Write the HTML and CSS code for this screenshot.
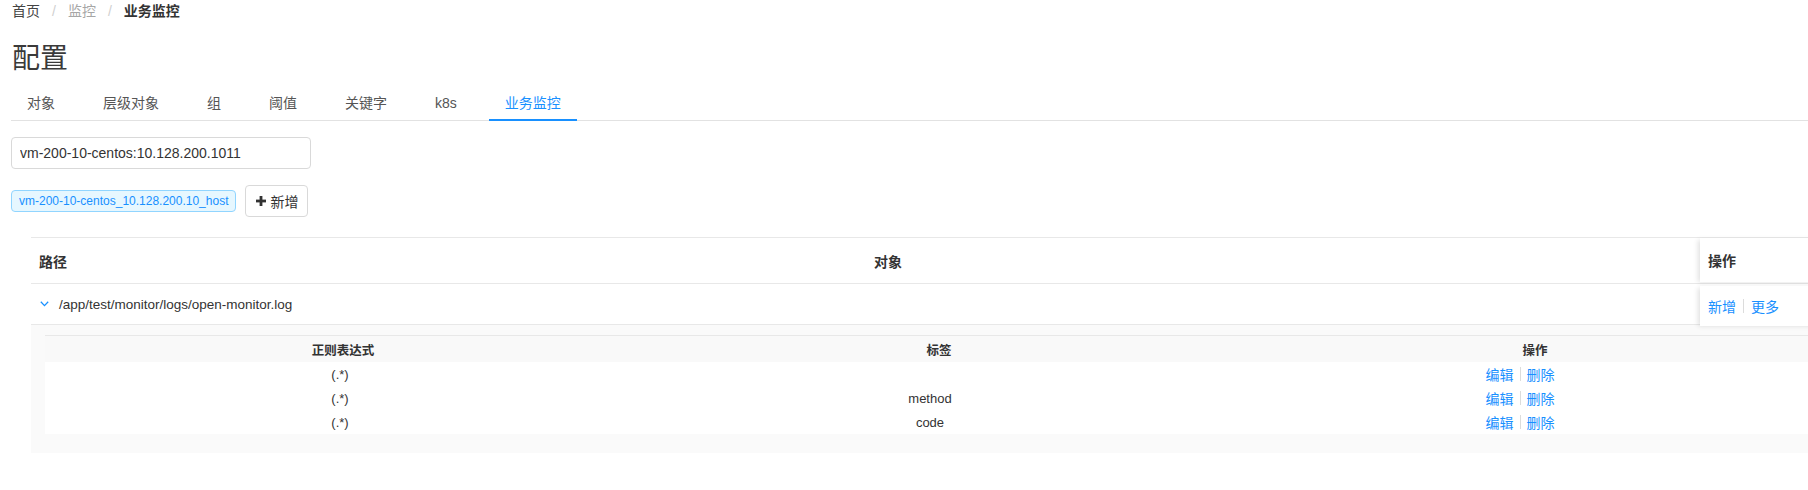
FILE: index.html
```html
<!DOCTYPE html>
<html lang="zh">
<head>
<meta charset="utf-8">
<title>配置</title>
<link rel="stylesheet" href="styles.css">
</head>
<body>
<div class="page">
  <nav class="crumbs">
    <span class="crumb">首页</span><span class="sep">/</span><span class="crumb muted">监控</span><span class="sep">/</span><span class="crumb current">业务监控</span>
  </nav>
  <h1 class="title">配置</h1>
  <div class="tabs">
    <div class="tab">对象</div>
    <div class="tab">层级对象</div>
    <div class="tab">组</div>
    <div class="tab">阈值</div>
    <div class="tab">关键字</div>
    <div class="tab">k8s</div>
    <div class="tab active">业务监控</div>
  </div>
  <div class="search-row">
    <input class="search" type="text" value="vm-200-10-centos:10.128.200.1011">
  </div>
  <div class="tag-row">
    <span class="tag">vm-200-10-centos_10.128.200.10_host</span>
    <button class="btn"><svg class="plus" width="10" height="10" viewBox="0 0 10 10"><rect x="3.6" y="0" width="2.8" height="10" fill="#333"/><rect x="0" y="3.6" width="10" height="2.8" fill="#333"/></svg>新增</button>
  </div>
  <div class="table">
    <div class="thead">
      <div class="th c-path">路径</div>
      <div class="th c-obj">对象</div>
    </div>
    <div class="trow">
      <div class="td c-path"><svg class="chev" width="9" height="6" viewBox="0 0 9 6"><polyline points="0.8,0.8 4.5,4.6 8.2,0.8" fill="none" stroke="#1890ff" stroke-width="1.3"/></svg><span>/app/test/monitor/logs/open-monitor.log</span></div>
      <div class="td c-obj"></div>
    </div>
    <div class="expand">
      <div class="inner">
        <div class="ihead">
          <div class="ih">正则表达式</div>
          <div class="ih">标签</div>
          <div class="ih">操作</div>
        </div>
        <div class="ibody">
          <div class="irow">
            <div class="ic">(.*)</div>
            <div class="ic"></div>
            <div class="ic"><a class="lnk">编辑</a><span class="bar"></span><a class="lnk">删除</a></div>
          </div>
          <div class="irow">
            <div class="ic">(.*)</div>
            <div class="ic">method</div>
            <div class="ic"><a class="lnk">编辑</a><span class="bar"></span><a class="lnk">删除</a></div>
          </div>
          <div class="irow">
            <div class="ic">(.*)</div>
            <div class="ic">code</div>
            <div class="ic"><a class="lnk">编辑</a><span class="bar"></span><a class="lnk">删除</a></div>
          </div>
        </div>
      </div>
    </div>
    <div class="fixed">
      <div class="fh">操作</div>
      <div class="fr"><a class="lnk">新增</a><span class="bar wide"></span><a class="lnk">更多</a></div>
    </div>
  </div>
</div>
</body>
</html>
```

FILE: styles.css
```css
* { box-sizing: border-box; }
html, body { margin: 0; padding: 0; overflow: hidden; background: #fff; }
body {
  font-family: "Liberation Sans", "Noto Sans CJK SC", sans-serif;
  font-size: 14px;
  color: #333;
  width: 1808px;
  height: 490px;
}
.page { padding-left: 11px; }

.crumbs { height: 22px; line-height: 22px; font-size: 14px; padding-left: 1px; white-space: nowrap; }
.crumb { color: #444; }
.crumb.muted { color: #a6a6a6; }
.crumb.current { color: #333; font-weight: bold; }
.sep { color: #d0d0d0; margin: 0 12px; }

.title {
  margin: 17px 0 0 1px;
  font-size: 28px;
  line-height: 40px;
  height: 40px;
  font-weight: normal;
  color: #3a3a3a;
}

.tabs { display: flex; border-bottom: 1px solid #e2e2e2; }
.tab {
  padding: 13px 16px 5px;
  line-height: 22px;
  margin-right: 16px;
  margin-bottom: -1px;
  border-bottom: 2px solid transparent;
  color: #555;
  white-space: nowrap;
}
.tab.active { color: #1890ff; border-bottom-color: #1890ff; }

.search-row { margin-top: 16px; }
.search {
  display: block;
  width: 300px;
  height: 32px;
  border: 1px solid #d9d9d9;
  border-radius: 4px;
  padding: 0 8px;
  font-family: "Liberation Sans", "Noto Sans CJK SC", sans-serif;
  font-size: 14px;
  color: #333;
  outline: none;
}

.tag-row { margin-top: 16px; display: flex; align-items: center; height: 32px; }
.tag {
  height: 22px;
  line-height: 20px;
  padding: 0 7px;
  font-size: 12px;
  color: #1890ff;
  background: #e6f7ff;
  border: 1px solid #91d5ff;
  border-radius: 4px;
  white-space: nowrap;
}
.btn {
  margin-left: 9px;
  height: 32px;
  padding: 0 9px 0 10px;
  border: 1px solid #d9d9d9;
  border-radius: 4px;
  background: #fff;
  font-family: "Liberation Sans", "Noto Sans CJK SC", sans-serif;
  font-size: 14px;
  color: #333;
  display: flex;
  align-items: center;
  gap: 4px;
}

.table {
  position: relative;
  margin-top: 20px;
  margin-left: 20px;
  border-top: 1px solid #e8e8e8;
}
.thead, .trow { display: grid; grid-template-columns: 835px 1fr; border-bottom: 1px solid #e8e8e8; }
.thead { height: 46px; }
.trow { height: 41px; }
.th { display: flex; align-items: center; padding-left: 8px; font-weight: bold; color: #333; }
.td { display: flex; align-items: center; padding-left: 9px; color: #333; }
.td span { font-size: 13.5px; }
.chev { margin-right: 10px; }

.expand { background: #fafafa; padding: 10px 0 19px 14px; }
.inner { border-top: 1px solid #e8e8e8; }
.ihead { display: grid; grid-template-columns: 596px 596px 596px; height: 26px; align-items: center; background: #f9f9f9; }
.ih { text-align: center; font-weight: bold; font-size: 12.5px; color: #333; }
.ibody { background: #fff; }
.irow { display: grid; grid-template-columns: 590px 590px 590px; height: 24px; align-items: center; }
.ic { text-align: center; font-size: 13px; color: #333; display: flex; justify-content: center; align-items: center; }

.lnk { color: #1890ff; font-size: 14px; cursor: pointer; }
.bar { display: inline-block; width: 1px; height: 14px; background: #dcdcdc; margin: 0 6px; }
.bar.wide { margin: 0 7px; }

.fixed { position: absolute; top: 0; left: 1669px; width: 130px; }
.fh {
  height: 44px;
  display: flex;
  align-items: center;
  padding-left: 8px;
  font-weight: bold;
  background: #fff;
  box-shadow: -3px 1px 5px -1px rgba(0,0,0,0.12);
}
.fr {
  margin-top: 4px;
  height: 40px;
  display: flex;
  align-items: center;
  padding-left: 8px;
  background: #fff;
  box-shadow: -3px 1px 5px -1px rgba(0,0,0,0.12);
}
```
